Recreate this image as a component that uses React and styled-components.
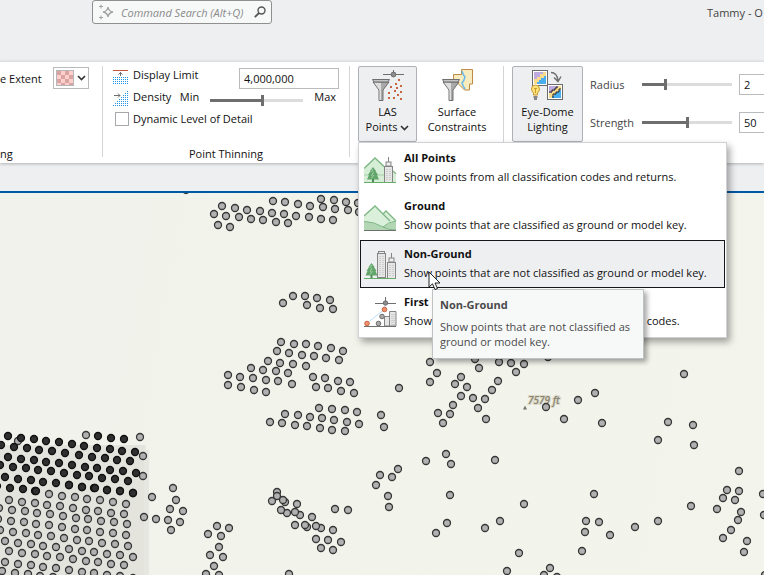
import React, { useState } from 'react'
import styled, { createGlobalStyle } from 'styled-components'

const GlobalStyle = createGlobalStyle`
  * {
    box-sizing: border-box;
  }
  html, body, #root {
    height: 100%;
    margin: 0;
  }
  body {
    overflow: hidden;
    background: #eeeff1;
  }
  body, button, input {
    font-family: "Open Sans", "Noto Sans", sans-serif;
    font-size: 11px;
    line-height: 15px;
    color: #111;
  }
  svg {
    flex: none;
  }
`

const Style = {
  App: styled.div`
    height: 100%;
    display: flex;
    flex-direction: column;
  `,

  Header: styled.header`
    height: 61px;
    flex: none;
    display: flex;
    align-items: flex-start;
    justify-content: space-between;
    padding-left: 92px;
  `,

  Search: styled.label`
    width: 180px;
    height: 24px;
    display: flex;
    align-items: center;
    gap: 7px;
    padding: 0 5px;
    border: 1px solid #8f8f8f;
    border-radius: 3px;
    background: #f7f9f9;
  `,

  SearchInput: styled.input`
    flex: 1;
    min-width: 0;
    padding: 0;
    border: 0;
    outline: 0;
    background: none;

    &::placeholder {
      color: #8a8a8a;
      font-style: italic;
      opacity: 1;
    }
  `,

  Account: styled.div`
    width: 57px;
    padding-top: 5px;
    white-space: nowrap;
    color: #444;
  `,

  Ribbon: styled.div`
    position: relative;
    z-index: 2;
    height: 102px;
    flex: none;
    display: flex;
    padding: 4px 0 6px;
    border-top: 1px solid #dddfe3;
    background: #fff;
    box-shadow: 0 1px 3px rgba(0, 0, 0, 0.25);
  `,

  Group: styled.section`
    flex: none;
    width: ${(p) => p.$width};
    display: flex;
    flex-direction: column;
    justify-content: space-between;
    padding: 0 ${(p) => p.$pad || '0'};
    border-right: ${(p) => (p.$last ? '0' : '1px solid #d2d4d8')};
  `,

  GroupLabel: styled.div`
    margin-bottom: -4px;
    text-align: ${(p) => p.$align || 'center'};
  `,

  Lines: styled.div`
    display: flex;
    flex-direction: column;
    gap: 4px;
    line-height: 18px;
  `,

  Line: styled.div`
    height: 18px;
    display: flex;
    align-items: center;
    gap: 5px;
    white-space: nowrap;

    input:not([type="checkbox"]) {
      margin-top: 6px;
    }
  `,

  ExtentLine: styled.div`
    display: flex;
    align-items: center;
    justify-content: space-between;
    padding: 1px 13px 0 0;
    white-space: nowrap;
  `,

  ColorButton: styled.button`
    width: 36px;
    height: 22px;
    display: flex;
    align-items: center;
    gap: 3px;
    padding: 0 2px;
    border: 1px solid #b9bbbe;
    background: #fff;
  `,

  Swatch: styled.span`
    flex: none;
    width: 18px;
    height: 16px;
    border: 1px solid #b5b7ba;
    background: repeating-conic-gradient(#ffcfcd 0 25%, #d9a4a2 0 50%) 0 0 / 8px 8px;
  `,

  NumberBox: styled.input`
    width: ${(p) => p.$width};
    height: 21px;
    margin-left: auto;
    padding: 0 4px;
    border: 1px solid #b9bbbe;
    background: #fff;
  `,

  Slider: styled.input`
    appearance: none;
    width: ${(p) => p.$width};
    height: 11px;
    margin: 0;
    background: linear-gradient(#6e6e6e 0 0) 0 center / ${(p) => p.$fill}% 3px no-repeat,
      linear-gradient(#dcdcdc 0 0) 0 center / 100% 3px no-repeat;

    &::-webkit-slider-thumb {
      appearance: none;
      width: 3px;
      height: 11px;
      background: #6e6e6e;
    }
  `,

  DensitySlider: styled.div`
    display: flex;
    align-items: center;
    gap: 11px;
    margin-left: auto;
    padding-right: 3px;
  `,

  Check: styled.input`
    appearance: none;
    width: 14px;
    height: 14px;
    margin: 0 -1px 0 2px;
    border: 1px solid #a6a8ab;
    background: #fff;

    &:checked {
      background: #6e6e6e;
    }
  `,

  CheckLabel: styled.label`
    display: flex;
    align-items: center;
    gap: 5px;
  `,

  Buttons: styled.div`
    display: flex;
    gap: 4px;
  `,

  MenuAnchor: styled.div`
    position: relative;
  `,

  ToolButton: styled.button`
    flex: none;
    width: ${(p) => p.$width};
    height: 76px;
    display: flex;
    flex-direction: column;
    align-items: center;
    justify-content: flex-start;
    gap: 2px;
    padding: 2px 0 0;
    border: 1px solid ${(p) => (p.$on ? '#aeb1b6' : 'transparent')};
    border-radius: 2px;
    background: ${(p) => (p.$on ? '#eeeff1' : 'transparent')};
    white-space: nowrap;
  `,

  Menu: styled.ul`
    position: absolute;
    top: 100%;
    left: 0;
    width: 369px;
    margin: 0;
    padding: 1px;
    list-style: none;
    border: 1px solid #cfd1d4;
    background: #fff;
    box-shadow: 3px 4px 7px rgba(0, 0, 0, 0.35);
  `,

  MenuItem: styled.li`
    position: relative;
  `,

  MenuButton: styled.button`
    width: 100%;
    height: 48px;
    display: flex;
    align-items: center;
    gap: 7px;
    padding: 0 3px;
    border: 1px solid ${(p) => (p.$active ? '#15171a' : 'transparent')};
    background: ${(p) => (p.$active ? '#eeeff1' : 'transparent')};
    text-align: left;
    white-space: nowrap;
  `,

  MenuText: styled.span`
    display: flex;
    flex-direction: column;
    gap: 4px;
    padding-bottom: 2px;
  `,

  Tooltip: styled.div`
    position: absolute;
    z-index: 1;
    top: 49px;
    left: 72px;
    width: 212px;
    padding: 7px 7px 9px;
    border: 1px solid #bfc1c4;
    background: #f7f9f9;
    color: #4a4a4a;
    box-shadow: 3px 3px 5px rgba(0, 0, 0, 0.35);

    p {
      margin: 7px 0 0;
    }
  `,

  Pointer: styled.svg`
    position: absolute;
    z-index: 2;
    top: 31px;
    left: 68px;
  `,

  Settings: styled.div`
    display: grid;
    grid-template-columns: 45px 90px 1fr;
    column-gap: 7px;
    align-content: start;
    align-items: center;
    row-gap: 17px;
    padding: 8px 0 0 7px;
    color: #444;
  `,

  EffectRow: styled.div`
    display: flex;
  `,

  MapPane: styled.main`
    flex: 1;
    min-height: 0;
    margin-top: 28px;
    border-top: 2px solid #0059a3;
    background: linear-gradient(100deg, #f1f2eb, #f3f4eb);
  `,

  MapCanvas: styled.svg`
    display: block;
    width: 100%;
    height: 100%;
  `,
}

// map points, in map units
const points = [
  [186, 190], [222, 206], [235, 208], [214, 214], [226, 216], [239, 217], [247, 210], [251, 219],
  [260, 211], [263, 220], [218, 225], [230, 227], [273, 201], [272, 213], [285, 202], [284, 214],
  [276, 222], [288, 223], [298, 204], [296, 216], [310, 206], [309, 217], [321, 199], [323, 207],
  [321, 219], [334, 200], [335, 209], [333, 220], [346, 202], [348, 210], [358, 203], [359, 212],
  [293, 296], [305, 296], [317, 298], [330, 300], [283, 303], [307, 305], [320, 308], [333, 309],
  [281, 342], [294, 344], [306, 344], [318, 346], [331, 348], [343, 351], [277, 351], [289, 353],
  [302, 355], [314, 356], [326, 358], [339, 360], [268, 361], [280, 363], [293, 364], [306, 366],
  [251, 368], [263, 370], [276, 371], [288, 373], [228, 375], [240, 377], [253, 378], [266, 380],
  [278, 381], [292, 384], [228, 385], [241, 387], [254, 390], [266, 392], [313, 377], [325, 378],
  [338, 381], [350, 382], [316, 387], [328, 388], [341, 391], [354, 393], [399, 388], [319, 408],
  [332, 409], [345, 410], [357, 412], [285, 414], [298, 415], [310, 417], [322, 418], [334, 420],
  [347, 422], [359, 424], [270, 422], [282, 423], [295, 425], [307, 426], [320, 428], [332, 430],
  [345, 431], [381, 415], [384, 427], [430, 362], [437, 373], [430, 382], [461, 377], [455, 384],
  [461, 396], [453, 405], [438, 413], [450, 414], [443, 423], [475, 359], [479, 368], [499, 362],
  [511, 363], [524, 364], [516, 372], [548, 357], [467, 387], [473, 398], [485, 399], [492, 390],
  [498, 381], [478, 408], [486, 419], [578, 400], [595, 393], [546, 407], [564, 419], [602, 423],
  [684, 374], [668, 422], [693, 425], [658, 440], [694, 445], [277, 492], [277, 496], [272, 501],
  [285, 502], [283, 500], [297, 504], [287, 513], [281, 510], [300, 515], [295, 512], [312, 517],
  [295, 525], [307, 527], [305, 525], [321, 528], [316, 526], [333, 530], [316, 539], [328, 540],
  [341, 542], [321, 548], [333, 550], [289, 574], [335, 509], [348, 510], [376, 485], [380, 475],
  [392, 477], [398, 469], [388, 496], [389, 507], [426, 461], [446, 454], [451, 464], [495, 460],
  [450, 495], [447, 523], [436, 533], [485, 528], [500, 521], [507, 571], [524, 504], [594, 494],
  [519, 553], [586, 521], [599, 522], [585, 532], [610, 535], [635, 527], [658, 521], [582, 551],
  [550, 568], [544, 575], [557, 577], [691, 506], [739, 471], [727, 490], [739, 491], [723, 498],
  [735, 500], [717, 509], [741, 512], [738, 520], [731, 530], [723, 538], [747, 541], [744, 552],
  [763, 494], [764, 515], [765, 575], [18, 441], [86, 435], [140, 437], [143, 456], [143, 476],
  [152, 497], [173, 488], [176, 500], [170, 509], [183, 511], [144, 517], [156, 519], [168, 520],
  [180, 522], [171, 530], [217, 526], [229, 528], [208, 534], [221, 536], [219, 547], [210, 555],
  [223, 557], [214, 566], [206, 574], [219, 575],
]

// scan lines over the building: x, y of the first point and how many follow
const roofLines = [
  [8, 436, 6], [84, 446, 5], [98, 436, 3], [1, 445, 6], [79, 455, 5], [8, 457, 11], [0, 465, 11],
  [5, 477, 11], [-3, 486, 4], [36, 491, 1], [69, 485, 6],
]
const wallLines = [
  [49, 494, 7], [9, 500, 10], [-1, 508, 11], [-2, 519, 11], [0, 530, 11], [5, 541, 11],
  [9, 551, 10], [5, 562, 11], [2, 571, 6],
]

const scan = (lines) =>
  lines.flatMap(([x, y, count]) =>
    Array.from({ length: count }, (_, i) => [Math.round(x + i * 12.75), Math.round(y + i * 1.6)])
  )

function Dots({ data, fill, stroke }) {
  return (
    <g fill={fill} stroke={stroke} strokeWidth="1.300">
      {data.map(([x, y], i) => (
        <circle key={i} cx={x} cy={y} r="3.500" />
      ))}
    </g>
  )
}

function MapView() {
  return (
    <Style.MapCanvas>
      <g transform="translate(0 -193)">
        <path d="M0 445h146v5h3v150H0z" fill="#dedfd8" opacity=".6" />
        <path d="M0 445h144v155H0z" fill="#e3e3dc" opacity=".7" />
        <path d="M523 409.500l2-4 2 4z" fill="#77756a" />
        <text x="528" y="404" fontSize="10" fontStyle="italic" fontWeight="600" fill="#8a8674" stroke="#dcd9c8" strokeWidth="2" paintOrder="stroke">
          7579 ft
        </text>
        <Dots data={points} fill="#b1b1b1" stroke="#363636" />
        <Dots data={scan(wallLines)} fill="#b1b1b1" stroke="#363636" />
        <Dots data={scan(roofLines)} fill="#303030" stroke="#101010" />
      </g>
    </Style.MapCanvas>
  )
}

function Chevron() {
  return (
    <svg width="9" height="6" viewBox="0 0 9 6" fill="none" stroke="#333" strokeWidth="1.600">
      <path d="M1 1l3.500 3.500L8 1" />
    </svg>
  )
}

function Funnel() {
  return (
    <g stroke="#6e6e6e">
      <path d="M2 13l6 8v10.500h4V21l6-8z" fill="#a9a9a9" />
      <path d="M10 14v17H8.500V21L3 13.500z" fill="#dedede" stroke="none" />
      <path d="M1.500 10.500h17l-1.500 2.500h-14z" fill="#c4c4c4" />
    </g>
  )
}

function LasIcon() {
  const returns = [[27, 10], [24, 14], [19, 17], [29, 16], [23, 21], [29, 22], [17, 23], [22, 28], [29, 29], [25, 18], [26, 25], [17, 28]]
  return (
    <svg width="34" height="33" viewBox="0 0 34 33">
      <Funnel />
      <path d="M12 5.500h21M22.500 1v5" stroke="#6e6e6e" />
      <circle cx="22.500" cy="5.500" r="2.400" fill="#8c8c8c" stroke="#6e6e6e" />
      {returns.map(([x, y]) => (
        <rect key={`${x}-${y}`} x={x} y={y} width="2" height="2" fill="#c8643f" />
      ))}
    </svg>
  )
}

function SurfaceIcon() {
  return (
    <svg width="33" height="33" viewBox="0 0 33 33">
      <path d="M20.500.5h11v14.500h-3v6h-5l-11-11V5.500h8z" fill="#f7ebc0" stroke="#c08a45" />
      <path d="M21 2q1 4 3 6-1 4-3 6 1 3 3 6" fill="none" stroke="#63b8e8" strokeWidth="1.400" />
      <Funnel />
    </svg>
  )
}

function ScenePicture({ x, y }) {
  return (
    <g transform={`translate(${x} ${y})`}>
      <rect x=".5" y=".5" width="15" height="15" fill="#fff" stroke="#6a6a6a" />
      <rect x="2" y="2" width="12" height="12" fill="#48aef0" />
      <path d="M2 2h12v4h-2v2h-3v2H7v2H5v2H2z" fill="#f8dc8c" />
      <path d="M2 2h9v2H8v3H5v2H2z" fill="#bda9dd" />
      {x > 10 && <path d="M14 5h-2v3H9v2H6v4M10 2v2H8v2H5v2H2" fill="none" stroke="#222" />}
    </g>
  )
}

function EyeDomeIcon() {
  return (
    <svg width="33" height="33" viewBox="0 0 33 33">
      <ScenePicture x={1} y={1} />
      <ScenePicture x={16} y={15} />
      <path d="M20 3.500q6 0 7 8M23 8.500l4 4 3-5" fill="none" stroke="#6e6e6e" strokeWidth="1.400" />
      <path d="M2.500 26v-2q-2-2-2-4a4 4 0 018 0q0 2-2 4v2z" fill="#ffe27a" stroke="#c99a2e" />
      <path d="M4.500 24v-4M3 19.500h3" stroke="#c99a2e" />
      <path d="M2.500 28h4M3 30h3" stroke="#666" strokeWidth="1.600" />
    </svg>
  )
}

function Tree({ x }) {
  return (
    <g transform={`translate(${x} 14)`}>
      <path d="M5.500 0l3 4H8l2.500 4H9.500l2 4.500h-12l2-4.500H.5L3 4h-.5z" fill="#62a56a" />
      <path d="M5.500 2l-1.500 3M6 5L4 9M6.500 8L4 11.500" stroke="#a3d0a6" />
      <path d="M5.500 12v3.500" stroke="#4d8a53" strokeWidth="2" />
    </g>
  )
}

function Tower({ x, y, height }) {
  return (
    <g transform={`translate(${x} ${y})`} stroke="#858585">
      <path d="M4.500-9v5" />
      <rect x="2" y="-4" width="5" height="4" fill="#eee" />
      <rect x=".5" y=".5" width="8" height={height} fill="#e6e6e6" />
      <path d="M3 3v12M6 3v12" stroke="#b5b5b5" strokeDasharray="1 1" />
    </g>
  )
}

function AllPointsIcon() {
  return (
    <svg width="33" height="30" viewBox="0 0 33 30">
      <path d="M0 15L11 5l21 17v8H0z" fill="#d6edd6" />
      <path d="M0 15.500L11 5l9 8.500M29 18l3 3" fill="none" stroke="#7fb886" strokeWidth="1.400" />
      <path d="M0 22h20" stroke="#a6d0aa" />
      <Tree x={3.5} />
      <Tower x={20} y={13} height={16} />
      <path d="M0 29.500h32" stroke="#64ad6b" />
    </svg>
  )
}

function GroundIcon() {
  return (
    <svg width="33" height="30" viewBox="0 0 33 30">
      <path d="M0 15L11 5l8 8 3-3 10 10v9H0z" fill="#dbf0db" />
      <path d="M0 20q9 1 19 6 7-5 13-6v9H0z" fill="#b3d7b4" />
      <path d="M0 15L11 5l15 15M19 13l3-3 10 10" fill="none" stroke="#7fb886" strokeWidth="1.400" />
      <path d="M0 20.500q10 0 19 5.500 5-5 13-6" fill="none" stroke="#7fb886" />
      <path d="M19 26q5 3 13 3" fill="none" stroke="#7fb886" />
      <path d="M0 29.500h32" stroke="#6e6e6e" />
    </svg>
  )
}

function NonGroundIcon() {
  return (
    <svg width="33" height="30" viewBox="0 0 33 30">
      <rect x="14.500" y="2.500" width="6" height="2" fill="#eee" stroke="#858585" />
      <rect x="13.500" y="4.500" width="8" height="24" fill="#e6e6e6" stroke="#858585" />
      <path d="M16 7v20M19 7v20" stroke="#b5b5b5" strokeDasharray="1 1" />
      <Tower x={23} y={13} height={16} />
      <Tree x={2} />
      <path d="M0 29.500h32" stroke="#64ad6b" />
    </svg>
  )
}

function FirstReturnIcon() {
  return (
    <svg width="33" height="30" viewBox="0 0 33 30">
      <path d="M3 26L21 12v-6" fill="none" stroke="#bfe0f5" />
      <path d="M11 6.500h21M21.500 0v6" stroke="#6e6e6e" />
      <circle cx="21.500" cy="6" r="2.200" fill="#8c8c8c" stroke="#6e6e6e" />
      <path d="M20.500 29v-9.500h5v-5h6.500V29z" fill="#e6e6e6" stroke="#858585" />
      <path d="M25.500 19v10" stroke="#858585" />
      <path d="M28 17v11M30 17v11" stroke="#b5b5b5" strokeDasharray="1 1" />
      <path d="M0 29.500h32" stroke="#6e6e6e" />
      <circle cx="3" cy="26.500" r="2.300" fill="#f0906c" stroke="#c8643f" />
      <circle cx="20.500" cy="12.500" r="2.300" fill="#f0906c" stroke="#c8643f" />
      <circle cx="14.500" cy="26.500" r="2.300" fill="#a9a9a9" stroke="#6e6e6e" />
      <circle cx="18" cy="19.500" r="2.300" fill="#a9a9a9" stroke="#6e6e6e" />
    </svg>
  )
}

function DotGrid({ cells }) {
  return cells.map(([x, y]) => <rect key={`${x}-${y}`} x={x} y={y} width="1" height="1" fill="#1f95e0" />)
}

const evens = [0, 2, 4, 6, 8, 10, 12, 14]
const limitCells = [11, 13, 15, 17].flatMap((y) => evens.map((x) => [x, y]))
const densityCells = evens.flatMap((y) => evens.filter((x) => x + y >= 14).map((x) => [x, y + 3]))

function LimitIcon() {
  return (
    <svg width="15" height="18" viewBox="0 0 15 18">
      <DotGrid cells={limitCells} />
      <path d="M0 4.500h15" stroke="#c8553a" />
      <path d="M7.500 10V6M5.500 8.500l2-2 2 2" fill="none" stroke="#6e6e6e" />
    </svg>
  )
}

function DensityIcon() {
  return (
    <svg width="15" height="18" viewBox="0 0 15 18">
      <DotGrid cells={densityCells} />
      <path d="M1 7.500h6M5 5.500l2 2-2 2" fill="none" stroke="#6e6e6e" />
    </svg>
  )
}

function SparkleIcon() {
  return (
    <svg width="16" height="16" viewBox="0 0 16 16" fill="none" stroke="#a3a3a3">
      <path d="M10 3q.6 4.400 5 5-4.400.6-5 5-.6-4.400-5-5 4.400-.6 5-5z" strokeWidth="1.300" />
      <path d="M3 .5v4M1 2.500h4M3 11.500v4M1 13.500h4" />
    </svg>
  )
}

function SearchIcon() {
  return (
    <svg width="12" height="12" viewBox="0 0 12 12" fill="none" stroke="#555" strokeWidth="1.400">
      <circle cx="7.500" cy="4.500" r="3.500" />
      <path d="M5 7L.8 11.200" strokeWidth="1.800" />
    </svg>
  )
}

const menuItems = [
  { title: 'All Points', text: 'Show points from all classification codes and returns.', Icon: AllPointsIcon },
  { title: 'Ground', text: 'Show points that are classified as ground or model key.', Icon: GroundIcon },
  { title: 'Non-Ground', text: 'Show points that are not classified as ground or model key.', Icon: NonGroundIcon },
  { title: 'First Return', text: 'Show first return points across all classification codes.', Icon: FirstReturnIcon },
]

function PointsMenu({ active, onSelect }) {
  return (
    <Style.Menu>
      {menuItems.map(({ title, text, Icon }) => (
        <Style.MenuItem key={title}>
          <Style.MenuButton $active={title === active} onClick={() => onSelect(title)}>
            <Icon />
            <Style.MenuText>
              <b>{title}</b>
              <span>{text}</span>
            </Style.MenuText>
          </Style.MenuButton>
          {title === active && (
            <>
              <Style.Tooltip role="tooltip">
                <b>{title}</b>
                <p>{text}</p>
              </Style.Tooltip>
              <Style.Pointer width="13" height="20" viewBox="0 0 13 20">
                <path d="M1 1v15l3.500-3.200L7 18.500l2.500-1L7 12h5z" fill="#fff" stroke="#222" />
              </Style.Pointer>
            </>
          )}
        </Style.MenuItem>
      ))}
    </Style.Menu>
  )
}

function Range({ id, value, width, onChange }) {
  return (
    <Style.Slider
      type="range"
      id={id}
      value={value}
      $fill={value}
      $width={width}
      onChange={(e) => onChange(Number(e.target.value))}
    />
  )
}

function App() {
  const [active, setActive] = useState('Non-Ground')
  const [density, setDensity] = useState(56)
  const [radius, setRadius] = useState(25)
  const [strength, setStrength] = useState(50)

  return (
    <Style.App>
      <GlobalStyle />
      <Style.Header>
        <Style.Search>
          <SparkleIcon />
          <Style.SearchInput aria-label="Command Search" placeholder="Command Search (Alt+Q)" />
          <SearchIcon />
        </Style.Search>
        <Style.Account>Tammy - O</Style.Account>
      </Style.Header>

      <Style.Ribbon>
        <Style.Group $width="103px">
          <Style.ExtentLine>
            <span>e Extent</span>
            <Style.ColorButton aria-label="Extent colour">
              <Style.Swatch />
              <Chevron />
            </Style.ColorButton>
          </Style.ExtentLine>
          <Style.GroupLabel $align="left">ng</Style.GroupLabel>
        </Style.Group>

        <Style.Group $width="247px" $pad="10px">
          <Style.Lines>
            <Style.Line>
              <LimitIcon />
              <label htmlFor="limit">Display Limit</label>
              <Style.NumberBox id="limit" $width="100px" defaultValue="4,000,000" />
            </Style.Line>
            <Style.Line>
              <DensityIcon />
              <label htmlFor="density">Density</label>
              <Style.DensitySlider>
                <span>Min</span>
                <Range id="density" width="93px" value={density} onChange={setDensity} />
                <span>Max</span>
              </Style.DensitySlider>
            </Style.Line>
            <Style.Line>
              <Style.CheckLabel>
                <Style.Check type="checkbox" />
                Dynamic Level of Detail
              </Style.CheckLabel>
            </Style.Line>
          </Style.Lines>
          <Style.GroupLabel>Point Thinning</Style.GroupLabel>
        </Style.Group>

        <Style.Group $width="154px" $pad="8px">
          <Style.Buttons>
            <Style.MenuAnchor>
              <Style.ToolButton $width="59px" $on>
                <LasIcon />
                <span>
                  LAS
                  <br />
                  Points <Chevron />
                </span>
              </Style.ToolButton>
              <PointsMenu active={active} onSelect={setActive} />
            </Style.MenuAnchor>
            <Style.ToolButton $width="72px">
              <SurfaceIcon />
              <span>
                Surface
                <br />
                Constraints
              </span>
            </Style.ToolButton>
          </Style.Buttons>
        </Style.Group>

        <Style.Group $width="260px" $pad="8px" $last>
          <Style.EffectRow>
            <Style.ToolButton $width="71px" $on>
              <EyeDomeIcon />
              <span>
                Eye-Dome
                <br />
                Lighting
              </span>
            </Style.ToolButton>
            <Style.Settings>
              <label htmlFor="radius">Radius</label>
              <Range id="radius" width="90px" value={radius} onChange={setRadius} />
              <Style.NumberBox aria-label="Radius value" $width="60px" defaultValue="2" />
              <label htmlFor="strength">Strength</label>
              <Range id="strength" width="90px" value={strength} onChange={setStrength} />
              <Style.NumberBox aria-label="Strength value" $width="60px" defaultValue="50" />
            </Style.Settings>
          </Style.EffectRow>
        </Style.Group>
      </Style.Ribbon>

      <Style.MapPane>
        <MapView />
      </Style.MapPane>
    </Style.App>
  )
}

export default App
